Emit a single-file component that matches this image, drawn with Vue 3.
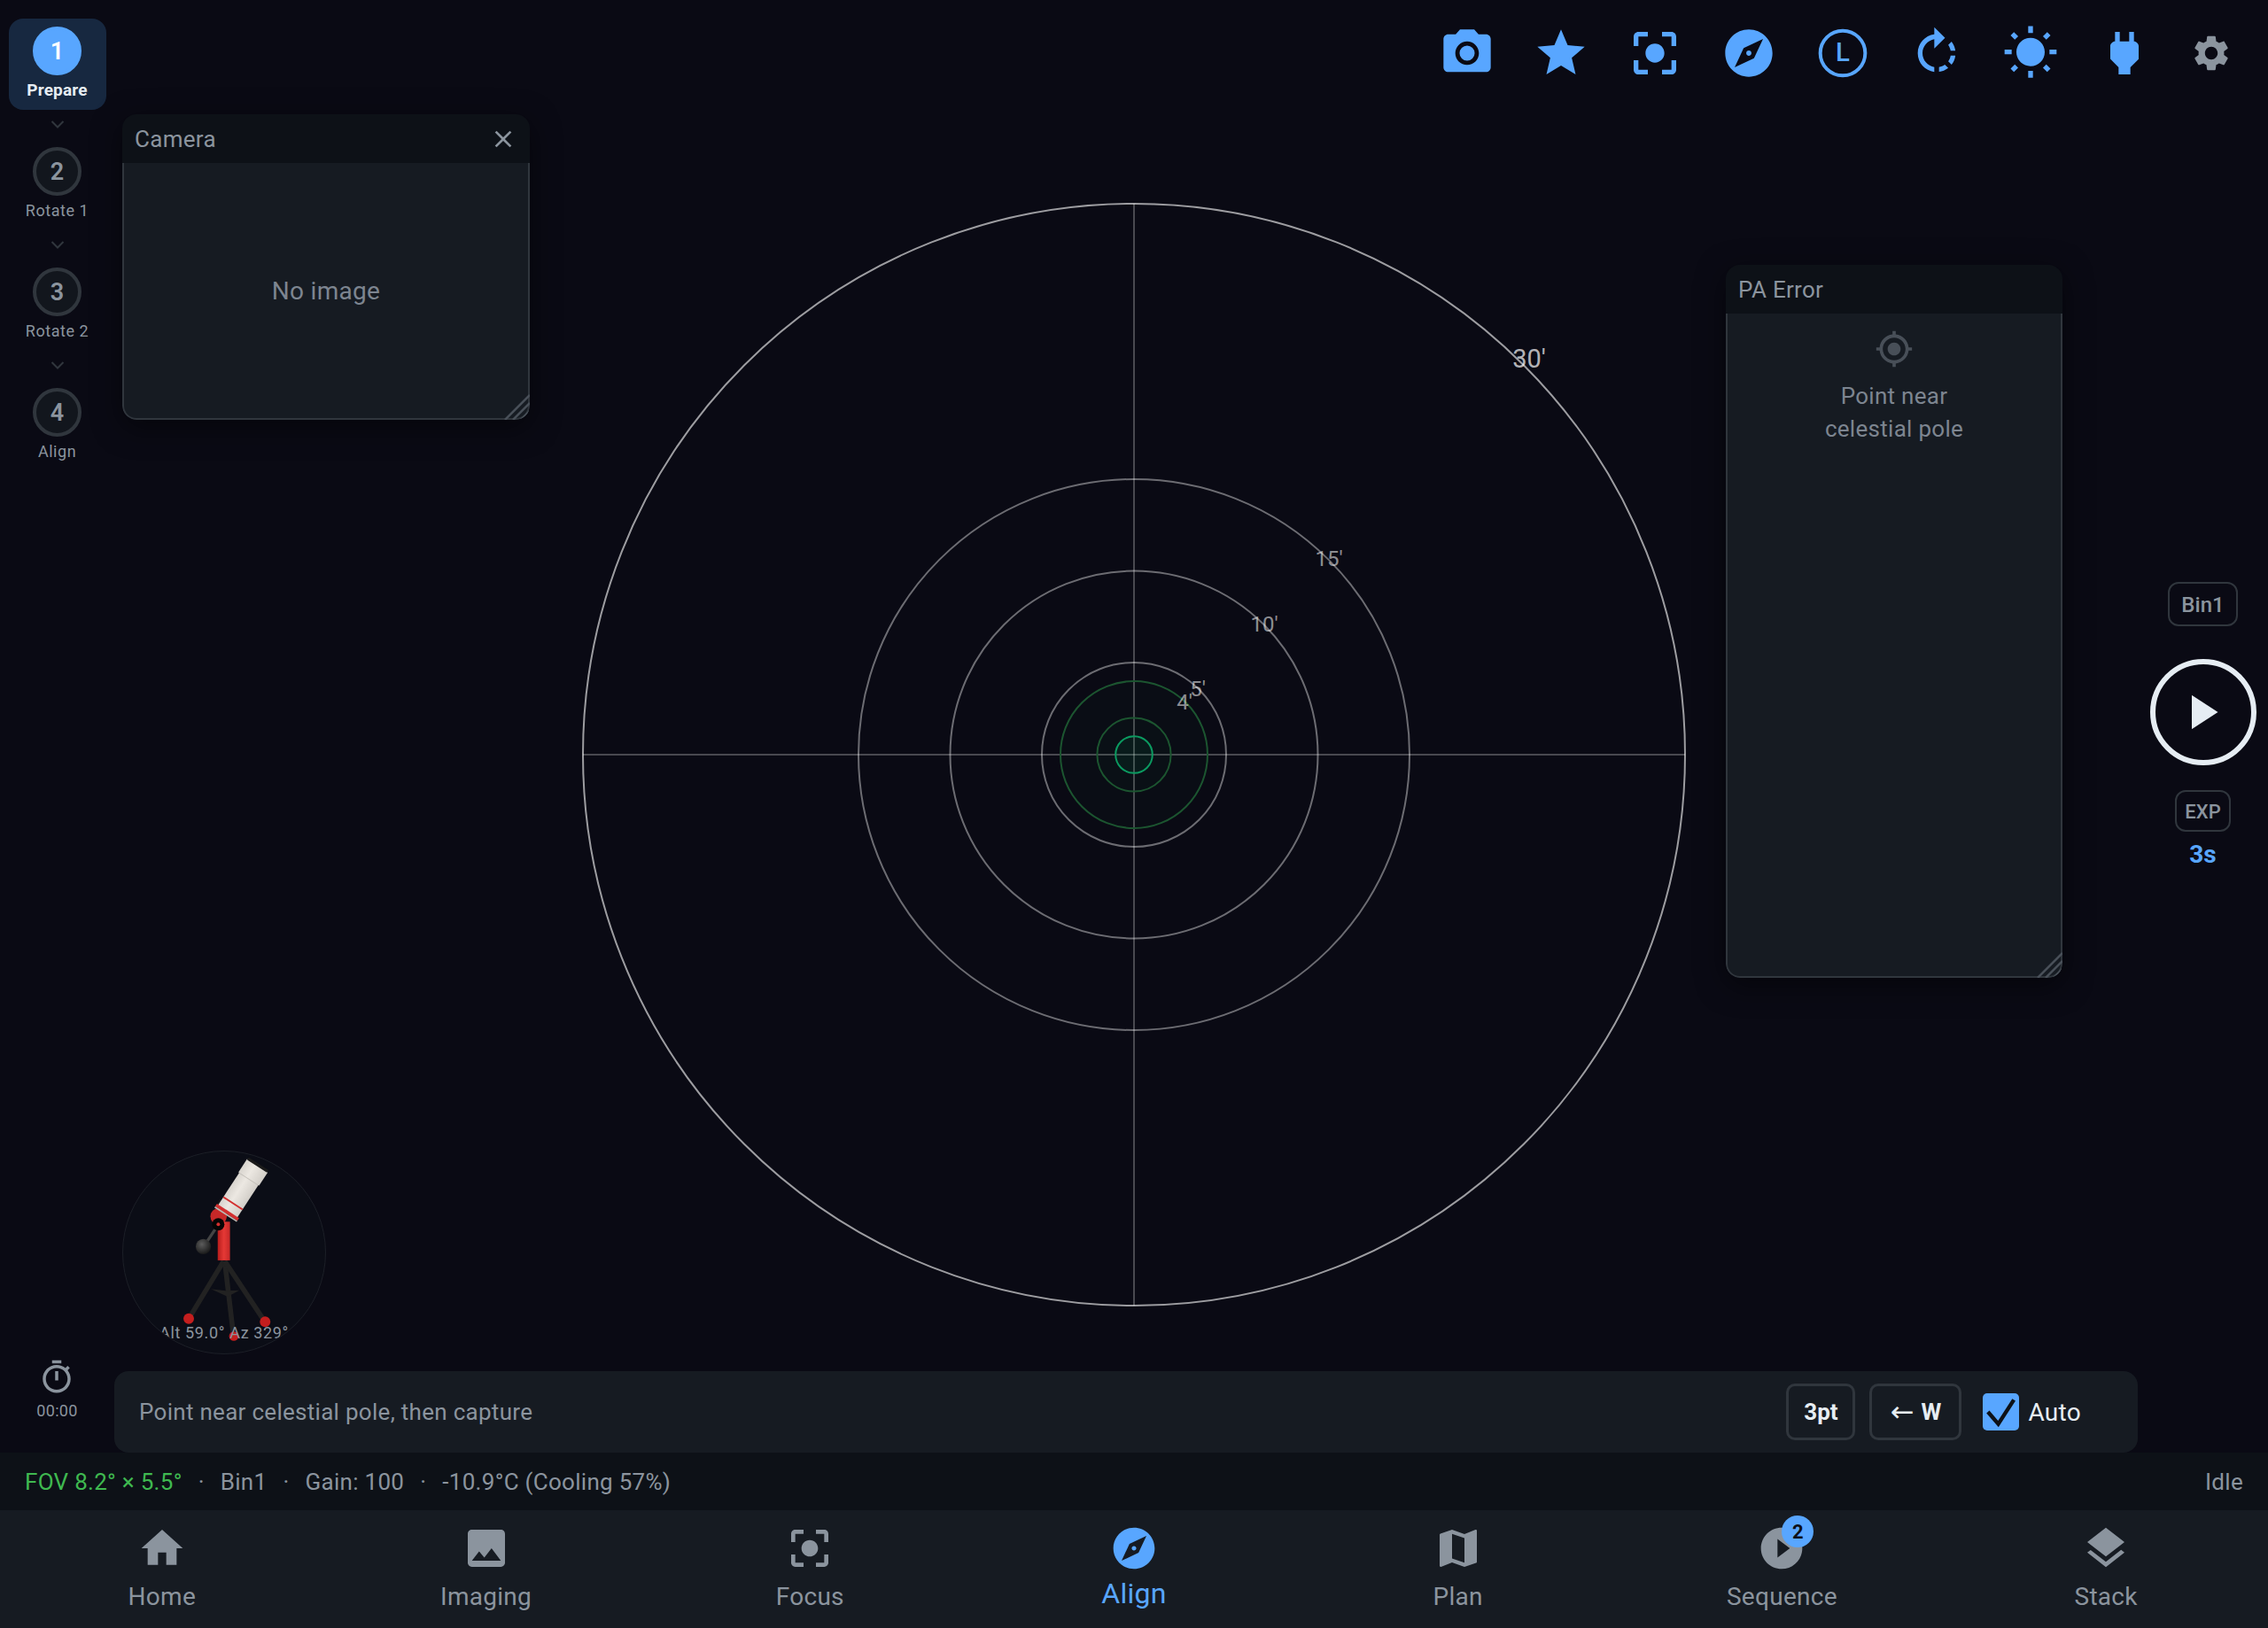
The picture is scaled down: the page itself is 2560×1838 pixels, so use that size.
<script setup>
const steps = [
  { n: 1, label: 'Prepare', active: true },
  { n: 2, label: 'Rotate 1' },
  { n: 3, label: 'Rotate 2' },
  { n: 4, label: 'Align' },
]

const icons = {
  camera: 'M12 15.2a3.2 3.2 0 1 0 0-6.4 3.2 3.2 0 0 0 0 6.4zM9 2L7.17 4H4c-1.1 0-2 .9-2 2v12c0 1.1.9 2 2 2h16c1.1 0 2-.9 2-2V6c0-1.1-.9-2-2-2h-3.17L15 2H9zm3 15c-2.76 0-5-2.24-5-5s2.24-5 5-5 5 2.24 5 5-2.24 5-5 5z',
  star: 'M12 17.27L18.18 21l-1.64-7.03L22 9.24l-7.19-.61L12 2 9.19 8.63 2 9.24l5.46 4.73L5.82 21z',
  focus: 'M12 8c-2.21 0-4 1.79-4 4s1.79 4 4 4 4-1.79 4-4-1.79-4-4-4zm-7 7H3v4c0 1.1.9 2 2 2h4v-2H5v-4zM5 5h4V3H5c-1.1 0-2 .9-2 2v4h2V5zm14-2h-4v2h4v4h2V5c0-1.1-.9-2-2-2zm0 16h-4v2h4c1.1 0 2-.9 2-2v-4h-2v4z',
  explore: 'M12 10.9c-.61 0-1.1.49-1.1 1.1s.49 1.1 1.1 1.1c.61 0 1.1-.49 1.1-1.1s-.49-1.1-1.1-1.1zM12 2C6.48 2 2 6.48 2 12s4.48 10 10 10 10-4.48 10-10S17.52 2 12 2zm2.19 12.19L6 18l3.81-8.19L18 6l-3.81 8.19z',
  rotate: 'M15.55 5.55L11 1v3.07C7.06 4.56 4 7.92 4 12s3.05 7.44 7 7.93v-2.02c-2.84-.48-5-2.94-5-5.91s2.16-5.43 5-5.91V10l4.55-4.45zM19.93 11c-.17-1.39-.72-2.73-1.62-3.89l-1.42 1.42c.54.75.88 1.6 1.02 2.47h2.02zM13 17.9v2.02c1.39-.17 2.74-.71 3.9-1.61l-1.44-1.44c-.75.54-1.59.89-2.46 1.03zm3.89-2.42l1.42 1.41c.9-1.16 1.45-2.5 1.62-3.89h-2.02c-.14.87-.48 1.72-1.02 2.48z',
  sun: 'M6.76 4.84l-1.8-1.79-1.41 1.41 1.79 1.79 1.42-1.41zM4 10.5H1v2h3v-2zm9-9.95h-2V3.5h2V.55zm7.45 3.91l-1.41-1.41-1.79 1.79 1.41 1.41 1.79-1.79zm-3.21 13.7l1.79 1.8 1.41-1.41-1.8-1.79-1.4 1.4zM20 10.5v2h3v-2h-3zm-8-5c-3.31 0-6 2.69-6 6s2.69 6 6 6 6-2.69 6-6-2.69-6-6-6zm-1 16.95h2V19.5h-2v2.95zm-7.45-3.91l1.41 1.41 1.79-1.8-1.41-1.41-1.79 1.8z',
  plug: 'M16.01 7L16 3h-2v4h-4V3H8v4h-.01C7 6.99 6 7.99 6 8.99v5.49L9.5 18v3h5v-3l3.5-3.51v-5.5c0-1-1-2-1.99-1.99z',
  gear: 'M19.14 12.94c.04-.3.06-.61.06-.94 0-.32-.02-.64-.07-.94l2.03-1.58c.18-.14.23-.41.12-.61l-1.92-3.32c-.12-.22-.37-.29-.59-.22l-2.39.96c-.5-.38-1.03-.7-1.62-.94l-.36-2.54c-.04-.24-.24-.41-.48-.41h-3.84c-.24 0-.43.17-.47.41l-.36 2.54c-.59.24-1.13.57-1.62.94l-2.39-.96c-.22-.08-.47 0-.59.22L2.74 8.87c-.12.21-.08.47.12.61l2.03 1.58c-.05.3-.09.63-.09.94s.02.64.07.94l-2.03 1.58c-.18.14-.23.41-.12.61l1.92 3.32c.12.22.37.29.59.22l2.39-.96c.5.38 1.03.7 1.62.94l.36 2.54c.05.24.24.41.48.41h3.84c.24 0 .44-.17.47-.41l.36-2.54c.59-.24 1.13-.56 1.62-.94l2.39.96c.22.08.47 0 .59-.22l1.92-3.32c.12-.22.07-.47-.12-.61l-2.01-1.58zM12 15.6c-1.98 0-3.6-1.62-3.6-3.6s1.62-3.6 3.6-3.6 3.6 1.62 3.6 3.6-1.62 3.6-3.6 3.6z',
  home: 'M10 20v-6h4v6h5v-8h3L12 3 2 12h3v8z',
  image: 'M21 19V5c0-1.1-.9-2-2-2H5c-1.1 0-2 .9-2 2v14c0 1.1.9 2 2 2h14c1.1 0 2-.9 2-2zM8.5 13.5l2.5 3.01L14.5 12l4.5 6H5l3.5-4.5z',
  map: 'M20.5 3l-.16.03L15 5.1 9 3 3.36 4.9c-.21.07-.36.25-.36.48V20.5c0 .28.22.5.5.5l.16-.03L9 18.9l6 2.1 5.64-1.9c.21-.07.36-.25.36-.48V3.5c0-.28-.22-.5-.5-.5zM15 19l-6-2.11V5l6 2.11V19z',
  play: 'M12 2C6.48 2 2 6.48 2 12s4.48 10 10 10 10-4.48 10-10S17.52 2 12 2zm-2 14.5v-9l6 4.5-6 4.5z',
  layers: 'M11.99 18.54l-7.37-5.73L3 14.07l9 7 9-7-1.63-1.27-7.38 5.74zM12 16l7.36-5.73L21 9l-9-7-9 7 1.63 1.27L12 16z',
  timer: 'M15 1H9v2h6V1zm-4 13h2V8h-2v6zm8.03-6.61l1.42-1.42c-.43-.51-.9-.99-1.41-1.41l-1.42 1.42C16.07 4.74 14.12 4 12 4c-4.97 0-9 4.03-9 9s4.02 9 9 9 9-4.03 9-9c0-2.12-.74-4.07-1.97-5.61zM12 20c-3.87 0-7-3.13-7-7s3.13-7 7-7 7 3.13 7 7-3.13 7-7 7z',
  gps: 'M12 8c-2.21 0-4 1.79-4 4s1.79 4 4 4 4-1.79 4-4-1.79-4-4-4zm8.94 3c-.46-4.17-3.77-7.48-7.94-7.94V1h-2v2.06C6.83 3.52 3.52 6.83 3.06 11H1v2h2.06c.46 4.17 3.77 7.48 7.94 7.94V23h2v-2.06c4.17-.46 7.48-3.77 7.94-7.94H23v-2h-2.06zM12 19c-3.87 0-7-3.13-7-7s3.13-7 7-7 7 3.13 7 7-3.13 7-7 7z',
  close: 'M19 6.41L17.59 5 12 10.59 6.41 5 5 6.41 10.59 12 5 17.59 6.41 19 12 13.41 17.59 19 19 17.59 13.41 12z',
}

const tools = ['camera', 'star', 'focus', 'explore', 'clock', 'rotate', 'sun', 'plug']

const navItems = [
  { label: 'Home', icon: 'home' },
  { label: 'Imaging', icon: 'image' },
  { label: 'Focus', icon: 'focus' },
  { label: 'Align', icon: 'explore', active: true },
  { label: 'Plan', icon: 'map' },
  { label: 'Sequence', icon: 'play', badge: 2 },
  { label: 'Stack', icon: 'layers' },
]

const CX = 1280
const CY = 852
const OUTER = 622
const greyRings = [311, 207.5, 104]
const ringLabels = [
  { t: "30'", x: 1726, y: 415, big: true },
  { t: "15'", x: 1500, y: 639 },
  { t: "10'", x: 1427, y: 713 },
  { t: "5'", x: 1352, y: 786 },
  { t: "4'", x: 1337, y: 801 },
]
</script>

<template>
  <div class="app">
    <div class="viewport">
      <svg class="chart" viewBox="0 0 2560 1705">
        <line :x1="CX - OUTER" :y1="CY" :x2="CX + OUTER" :y2="CY" class="cross" />
        <line :x1="CX" :y1="CY - OUTER" :x2="CX" :y2="CY + OUTER" class="cross" />
        <circle :cx="CX" :cy="CY" :r="OUTER" class="ring ring-outer" />
        <circle v-for="r in greyRings" :key="r" :cx="CX" :cy="CY" :r="r" class="ring" />
        <circle :cx="CX" :cy="CY" r="83" class="ring-green" />
        <circle :cx="CX" :cy="CY" r="41.6" class="ring-green" />
        <circle :cx="CX" :cy="CY" r="20.8" class="ring-core" />
        <text
          v-for="l in ringLabels"
          :key="l.t"
          :x="l.x"
          :y="l.y"
          class="ring-label"
          :class="{ big: l.big }"
        >{{ l.t }}</text>
      </svg>

      <div class="toolbar">
        <template v-for="t in tools" :key="t">
          <svg v-if="t === 'clock'" class="tool" viewBox="0 0 24 24">
            <circle cx="12" cy="12" r="9.5" fill="none" stroke="#58a6ff" stroke-width="1.5" />
            <text x="12" y="15.4" text-anchor="middle" class="clock-l">L</text>
          </svg>
          <svg v-else class="tool" viewBox="0 0 24 24"><path :d="icons[t]" /></svg>
        </template>
        <svg class="tool gear" viewBox="0 0 24 24"><path :d="icons.gear" /></svg>
      </div>

      <div class="body">
        <aside class="rail">
          <template v-for="(s, i) in steps" :key="s.n">
            <div class="step" :class="{ active: s.active }">
              <div class="step-num">{{ s.n }}</div>
              <div class="step-label">{{ s.label }}</div>
            </div>
            <div v-if="i < steps.length - 1" class="step-link">
              <svg width="16" height="9" viewBox="0 0 16 9"><path d="M1.5 1l6.5 6.5L14.500 1" /></svg>
            </div>
          </template>
          <div class="timer">
            <svg class="timer-icon" viewBox="0 0 24 24"><path :d="icons.timer" /></svg>
            <span>00:00</span>
          </div>
        </aside>

        <div class="center">
          <div class="stage">
            <section class="panel camera-panel">
              <header class="panel-head">
                <span>Camera</span>
                <svg class="panel-close" viewBox="0 0 24 24"><path :d="icons.close" /></svg>
              </header>
              <div class="panel-body no-image">No image</div>
              <svg class="grip" viewBox="0 0 30 30"><path d="M30 2L2 30M30 11L11 30M30 20L20 30" /></svg>
            </section>

            <section class="panel pa-panel">
              <header class="panel-head"><span>PA Error</span></header>
              <div class="panel-body pa-body">
                <svg class="gps" viewBox="0 0 24 24"><path :d="icons.gps" /></svg>
                <p>Point near<br />celestial pole</p>
              </div>
              <svg class="grip" viewBox="0 0 30 30"><path d="M30 2L2 30M30 11L11 30M30 20L20 30" /></svg>
            </section>

            <div class="scope">
              <svg class="scope-art" viewBox="55 60 690 690">
                <defs>
                  <linearGradient id="mast" x1="0" x2="1" y1="0" y2="0">
                    <stop offset="0" stop-color="#b71c1c" />
                    <stop offset="0.5" stop-color="#e53935" />
                    <stop offset="1" stop-color="#c62828" />
                  </linearGradient>
                  <linearGradient id="tube" x1="0" x2="1" y1="0" y2="0">
                    <stop offset="0" stop-color="#d8d4ce" />
                    <stop offset="0.4" stop-color="#ece8e2" />
                    <stop offset="1" stop-color="#d2cec8" />
                  </linearGradient>
                  <radialGradient id="ball" cx="0.4" cy="0.35" r="0.7">
                    <stop offset="0" stop-color="#5c5c5c" />
                    <stop offset="1" stop-color="#161616" />
                  </radialGradient>
                </defs>
                <g stroke="#222" stroke-width="17">
                  <line x1="398" y1="435" x2="280" y2="630" />
                  <line x1="402" y1="435" x2="432" y2="690" />
                  <line x1="402" y1="435" x2="538" y2="640" />
                </g>
                <path d="M355 530 L405 536 L452 534 L412 556 Z" fill="#222" />
                <circle cx="279" cy="631" r="18" fill="#c41e1e" />
                <circle cx="540" cy="642" r="18" fill="#c41e1e" />
                <circle cx="433" cy="691" r="16" fill="#c41e1e" />
                <line x1="380" y1="310" x2="330" y2="385" stroke="#444" stroke-width="10" />
                <circle cx="329" cy="385" r="26" fill="url(#ball)" />
                <circle cx="381" cy="282" r="28" fill="#c62828" />
                <rect x="378" y="300" width="42" height="132" fill="url(#mast)" />
                <g transform="translate(410 268) rotate(33)">
                  <path d="M-44 -6 L-44 -26 L-24 -6 Z" fill="#1a1a1a" />
                  <rect x="-39" y="-140" width="78" height="142" fill="url(#tube)" />
                  <rect x="-42" y="-190" width="84" height="54" fill="url(#tube)" />
                  <rect x="-39" y="-137" width="78" height="3" fill="#c4c0ba" />
                  <rect x="-40" y="-198" width="80" height="10" fill="#1a1a1a" />
                  <rect x="-39" y="-40" width="78" height="6" fill="#d32f2f" />
                  <rect x="-45" y="-6" width="90" height="11" fill="#d32f2f" />
                  <rect x="-45" y="5" width="90" height="5" fill="#bdb9b3" />
                </g>
                <circle cx="380" cy="309" r="21" fill="#050505" />
                <circle cx="380" cy="309" r="6" fill="#d32f2f" />
              </svg>
              <span class="scope-text">Alt 59.0° Az 329°</span>
            </div>
          </div>

          <div class="prompt">
            <span class="prompt-text">Point near celestial pole, then capture</span>
            <div class="prompt-actions">
              <button class="btn">3pt</button>
              <button class="btn btn-dir"><span class="btn-arrow">←</span>W</button>
              <label class="auto">
                <span class="check">
                  <svg viewBox="0 0 42 42"><path d="M6 21l12 14L36 7" /></svg>
                </span>
                Auto
              </label>
            </div>
          </div>
        </div>

        <aside class="side">
          <div class="chip chip-bin">Bin1</div>
          <button class="shutter"><span class="shutter-tri"></span></button>
          <div class="chip chip-exp">EXP</div>
          <div class="exp-value">3s</div>
        </aside>
      </div>

      <footer class="status">
        <span class="fov">FOV 8.2° × 5.5°</span>
        <span class="dot">·</span>
        <span>Bin1</span>
        <span class="dot">·</span>
        <span>Gain: 100</span>
        <span class="dot">·</span>
        <span>-10.9°C (Cooling 57%)</span>
        <span class="idle">Idle</span>
      </footer>
    </div>

    <nav class="nav">
      <div v-for="item in navItems" :key="item.label" class="nav-item" :class="{ active: item.active }">
        <div class="nav-icon">
          <svg viewBox="0 0 24 24"><path :d="icons[item.icon]" /></svg>
          <span v-if="item.badge" class="badge">{{ item.badge }}</span>
        </div>
        <span class="nav-label">{{ item.label }}</span>
      </div>
    </nav>
  </div>
</template>

<style>
html, body {
  margin: 0;
  background: #0a0a14;
}
</style>

<style scoped>
.app {
  width: 2560px;
  height: 1838px;
  display: flex;
  flex-direction: column;
  background: #0a0a14;
  color: #8b949e;
  font-family: Roboto, "Liberation Sans", sans-serif;
  letter-spacing: 0.018em;
  overflow: hidden;
}

.viewport {
  position: relative;
  flex: 1;
  display: flex;
  flex-direction: column;
  min-height: 0;
}
.chart {
  position: absolute;
  inset: 0;
  width: 100%;
  height: 100%;
}
.cross {
  stroke: rgba(255, 255, 255, 0.26);
  stroke-width: 2;
}
.ring {
  fill: none;
  stroke: rgba(255, 255, 255, 0.4);
  stroke-width: 2;
}
.ring-outer {
  stroke: rgba(255, 255, 255, 0.6);
}
.ring-green {
  fill: rgba(63, 185, 80, 0.025);
  stroke: #1c5530;
  stroke-width: 2;
}
.ring-core {
  fill: rgba(0, 200, 120, 0.06);
  stroke: #0b9a60;
  stroke-width: 2;
}
.ring-label {
  fill: rgba(255, 255, 255, 0.55);
  font-size: 24px;
  text-anchor: middle;
  letter-spacing: 0;
}
.ring-label.big {
  font-size: 29px;
  fill: rgba(255, 255, 255, 0.7);
}

.toolbar {
  position: absolute;
  top: 28px;
  right: 40px;
  display: flex;
  align-items: center;
  gap: 42px;
  z-index: 2;
}
.tool {
  width: 64px;
  height: 64px;
  fill: #58a6ff;
  display: block;
}
.tool.gear {
  width: 48px;
  height: 48px;
  fill: #8b949e;
}
.clock-l {
  fill: #58a6ff;
  font-size: 11px;
  font-weight: 500;
  letter-spacing: 0;
}

.body {
  position: relative;
  flex: 1;
  display: flex;
  min-height: 0;
}

.rail {
  width: 129px;
  flex: none;
  display: flex;
  flex-direction: column;
  align-items: center;
  padding: 21px 0 37px;
  box-sizing: border-box;
}
.step {
  width: 110px;
  height: 103px;
  box-sizing: border-box;
  padding-top: 9px;
  border-radius: 16px;
  display: flex;
  flex-direction: column;
  align-items: center;
}
.step.active {
  background: #172840;
}
.step-num {
  width: 55px;
  height: 55px;
  box-sizing: border-box;
  border: 4px solid #30363d;
  border-radius: 50%;
  background: #12161d;
  display: flex;
  align-items: center;
  justify-content: center;
  font-size: 27px;
  font-weight: 600;
  letter-spacing: 0;
}
.step.active .step-num {
  border-color: #58a6ff;
  background: #58a6ff;
  color: #fff;
}
.step-label {
  margin-top: 5px;
  font-size: 18px;
  line-height: 24px;
  letter-spacing: 0.03em;
  white-space: nowrap;
}
.step.active .step-label {
  color: #e6edf3;
  font-weight: 700;
  font-size: 19px;
  letter-spacing: 0.01em;
}
.step-link {
  height: 33px;
  display: flex;
  align-items: center;
  justify-content: center;
}
.step-link path {
  fill: none;
  stroke: #30363d;
  stroke-width: 2;
}
.timer {
  margin-top: auto;
  display: flex;
  flex-direction: column;
  align-items: center;
  font-size: 18px;
}
.timer-icon {
  width: 42px;
  height: 42px;
  fill: #8b949e;
  margin-bottom: 6px;
}

.center {
  flex: 1;
  min-width: 0;
  display: flex;
  flex-direction: column;
}
.stage {
  position: relative;
  flex: 1;
  min-height: 0;
}

.panel {
  position: absolute;
  box-sizing: border-box;
  border-radius: 16px;
  overflow: hidden;
  box-shadow: 0 8px 32px rgba(0, 0, 0, 0.5);
  display: flex;
  flex-direction: column;
}
.camera-panel {
  left: 9px;
  top: 129px;
  width: 460px;
  height: 345px;
}
.pa-panel {
  left: 1819px;
  top: 299px;
  width: 380px;
  height: 805px;
}
.panel-head {
  height: 55px;
  flex: none;
  background: #0d1117;
  display: flex;
  align-items: center;
  justify-content: space-between;
  padding: 0 14px;
  font-size: 26px;
}
.panel-close {
  width: 32px;
  height: 32px;
  fill: #8b949e;
}
.panel-body {
  flex: 1;
  min-height: 0;
  background: #161b22;
  border: 2px solid #30363d;
  border-top: none;
  border-radius: 0 0 16px 16px;
}
.no-image {
  display: flex;
  align-items: center;
  justify-content: center;
  padding-top: 1px;
  font-size: 28px;
  color: #7d8590;
}
.pa-body {
  display: flex;
  flex-direction: column;
  align-items: center;
  padding-top: 18px;
  text-align: center;
}
.pa-body p {
  margin: 13px 0 0;
  font-size: 26px;
  line-height: 37px;
  color: #7d8590;
}
.gps {
  width: 44px;
  height: 44px;
  fill: #484f58;
}
.grip {
  position: absolute;
  right: 0;
  bottom: 0;
  width: 30px;
  height: 30px;
  stroke: #484f58;
  stroke-width: 2.5;
  fill: none;
}

.scope {
  position: absolute;
  left: 9px;
  bottom: 19px;
  width: 230px;
  height: 230px;
  box-sizing: border-box;
  border: 1px solid #1c1f27;
  border-radius: 50%;
  overflow: hidden;
  background: #0b0d16;
}
.scope-art {
  display: block;
  width: 100%;
  height: 100%;
}
.scope-text {
  position: absolute;
  left: 0;
  right: 0;
  top: 194px;
  text-align: center;
  font-size: 18px;
  line-height: 22px;
  letter-spacing: 0.035em;
  white-space: nowrap;
  color: #8b949e;
}

.prompt {
  height: 92px;
  flex: none;
  display: flex;
  align-items: center;
  justify-content: space-between;
  padding: 0 64px 0 28px;
  box-sizing: border-box;
  background: #161b22;
  border-radius: 16px;
}
.prompt-text {
  font-size: 26px;
}
.prompt-actions {
  display: flex;
  align-items: center;
  gap: 16px;
}
.btn {
  height: 64px;
  width: 78px;
  box-sizing: border-box;
  background: transparent;
  border: 3px solid #30363d;
  border-radius: 10px;
  color: #e6edf3;
  font: 700 26px Roboto, sans-serif;
  padding: 0;
  display: flex;
  align-items: center;
  justify-content: center;
}
.btn-dir {
  width: 104px;
  gap: 8px;
}
.btn-arrow {
  font: 400 32px "DejaVu Sans", sans-serif;
  line-height: 1;
}
.auto {
  display: flex;
  align-items: center;
  gap: 10px;
  margin-left: 8px;
  font-size: 28px;
  color: #e6edf3;
}
.check {
  width: 41px;
  height: 42px;
  background: #58a6ff;
  border-radius: 5px;
  display: block;
}
.check svg {
  display: block;
  width: 100%;
  height: 100%;
  fill: none;
  stroke: #0d1117;
  stroke-width: 4.5;
}

.side {
  width: 147px;
  flex: none;
  display: flex;
  flex-direction: column;
  align-items: center;
  justify-content: center;
}
.chip {
  box-sizing: border-box;
  border: 2.500px solid #30363d;
  border-radius: 12px;
  display: flex;
  align-items: center;
  justify-content: center;
  padding-top: 2px;
  font-weight: 500;
  letter-spacing: 0;
}
.chip-bin {
  width: 79px;
  height: 50px;
  font-size: 24px;
}
.chip-exp {
  width: 63px;
  height: 47px;
  font-size: 22px;
}
.shutter {
  width: 120px;
  height: 120px;
  margin: 37px 0 28px;
  padding: 0;
  box-sizing: border-box;
  background: transparent;
  border: 6px solid #e6edf3;
  border-radius: 50%;
  display: flex;
  align-items: center;
  justify-content: center;
}
.shutter-tri {
  width: 30px;
  height: 39px;
  margin-left: 4px;
  background: #e6edf3;
  clip-path: polygon(0 0, 100% 50%, 0 100%);
}
.exp-value {
  margin-top: 8px;
  font-size: 28px;
  line-height: 36px;
  font-weight: 700;
  color: #58a6ff;
  letter-spacing: 0;
}

.status {
  position: relative;
  height: 65px;
  flex: none;
  background: #0d1117;
  display: flex;
  align-items: center;
  padding: 0 28px;
  font-size: 26px;
}
.fov {
  color: #3fb950;
}
.dot {
  margin: 0 18px;
}
.idle {
  margin-left: auto;
}

.nav {
  height: 133px;
  flex: none;
  background: #161b22;
  display: grid;
  grid-template-columns: repeat(7, 1fr);
}
.nav-item {
  display: flex;
  flex-direction: column;
  align-items: center;
  padding-top: 15px;
}
.nav-icon {
  position: relative;
  width: 56px;
  height: 56px;
  fill: #8b949e;
}
.nav-icon svg {
  display: block;
  width: 100%;
  height: 100%;
}
.nav-label {
  margin-top: 9px;
  font-size: 28px;
  line-height: 36px;
}
.nav-item.active .nav-icon {
  fill: #58a6ff;
}
.nav-item.active .nav-label {
  margin-top: 5px;
  font-size: 32px;
  color: #58a6ff;
}
.badge {
  position: absolute;
  left: 28px;
  top: -9px;
  width: 36px;
  height: 36px;
  border-radius: 50%;
  background: #58a6ff;
  color: #0d1117;
  font-size: 22px;
  font-weight: 700;
  display: flex;
  align-items: center;
  justify-content: center;
  letter-spacing: 0;
}
</style>
